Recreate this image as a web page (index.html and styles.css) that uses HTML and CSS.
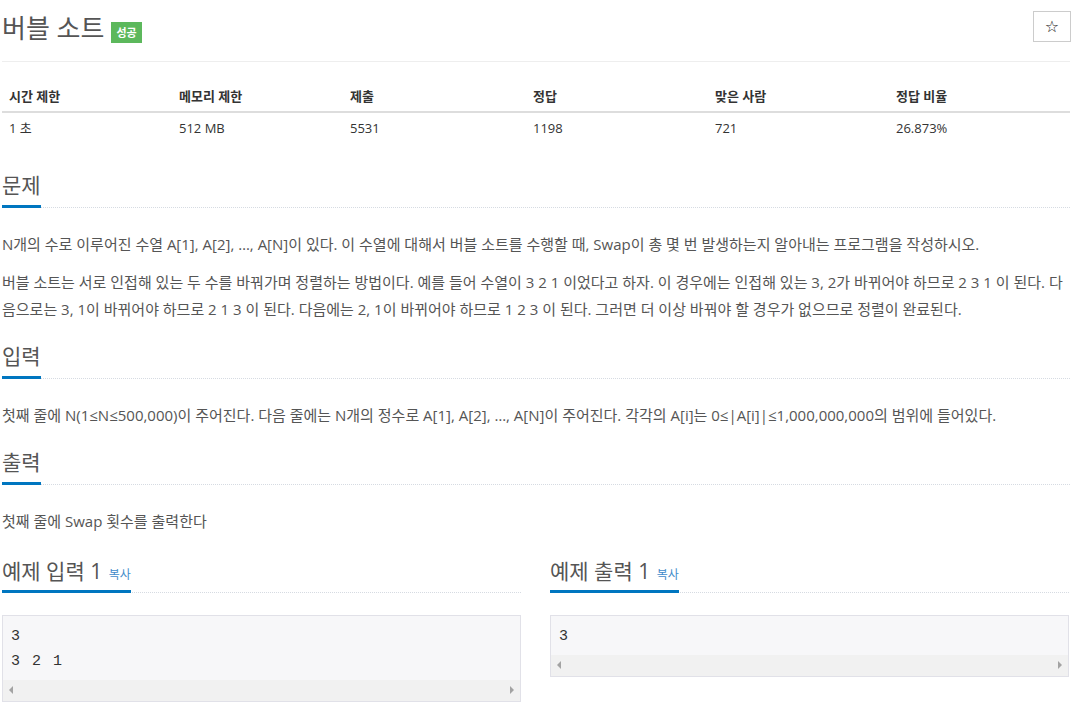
FILE: index.html
```html
<!DOCTYPE html>
<html lang="ko">
<head>
<meta charset="utf-8">
<title>버블 소트</title>
<link rel="stylesheet" href="styles.css">
</head>
<body>
<div class="page">
  <div class="page-header">
    <h1 class="title"><span class="title-text">버블 소트</span><span class="badge">성공</span></h1>
    <button class="star-btn" type="button">☆</button>
  </div>

  <div class="info-table">
    <div class="th">시간 제한</div>
    <div class="th">메모리 제한</div>
    <div class="th">제출</div>
    <div class="th">정답</div>
    <div class="th">맞은 사람</div>
    <div class="th">정답 비율</div>
    <div class="td">1 초</div>
    <div class="td">512 MB</div>
    <div class="td">5531</div>
    <div class="td">1198</div>
    <div class="td">721</div>
    <div class="td">26.873%</div>
  </div>

  <section class="section">
    <div class="headline"><h2><span>문제</span></h2></div>
    <div class="text">
      <p>N개의 수로 이루어진 수열 A[1], A[2], …, A[N]이 있다. 이 수열에 대해서 버블 소트를 수행할 때, Swap이 총 몇 번 발생하는지 알아내는 프로그램을 작성하시오.</p>
      <p>버블 소트는 서로 인접해 있는 두 수를 바꿔가며 정렬하는 방법이다. 예를 들어 수열이 3 2 1 이었다고 하자. 이 경우에는 인접해 있는 3, 2가 바뀌어야 하므로 2 3 1 이 된다. 다음으로는 3, 1이 바뀌어야 하므로 2 1 3 이 된다. 다음에는 2, 1이 바뀌어야 하므로 1 2 3 이 된다. 그러면 더 이상 바꿔야 할 경우가 없으므로 정렬이 완료된다.</p>
    </div>
  </section>

  <section class="section">
    <div class="headline"><h2><span>입력</span></h2></div>
    <div class="text">
      <p>첫째 줄에 N(1≤N≤500,000)이 주어진다. 다음 줄에는 N개의 정수로 A[1], A[2], …, A[N]이 주어진다. 각각의 A[i]는 0≤|A[i]|≤1,000,000,000의 범위에 들어있다.</p>
    </div>
  </section>

  <section class="section">
    <div class="headline"><h2><span>출력</span></h2></div>
    <div class="text">
      <p>첫째 줄에 Swap 횟수를 출력한다</p>
    </div>
  </section>

  <div class="samples">
    <section class="sample">
      <div class="headline"><h2><span>예제 입력 1 <a class="copy">복사</a></span></h2></div>
      <div class="pre-box">
        <pre>3
3 2 1</pre>
        <div class="hscroll"><i class="arr-l"></i><i class="arr-r"></i></div>
      </div>
    </section>
    <section class="sample">
      <div class="headline"><h2><span>예제 출력 1 <a class="copy">복사</a></span></h2></div>
      <div class="pre-box">
        <pre>3</pre>
        <div class="hscroll"><i class="arr-l"></i><i class="arr-r"></i></div>
      </div>
    </section>
  </div>
</div>
</body>
</html>
```

FILE: styles.css
```css
* { box-sizing: border-box; }
html, body { margin: 0; padding: 0; background: #fff; }
body {
  font-family: "Open Sans", "Noto Sans CJK KR", sans-serif;
  color: #555;
  font-size: 15px;
}
.page {
  width: 1068px;
  margin-left: 2px;
}
.page-header {
  display: flex;
  align-items: flex-start;
  justify-content: space-between;
  height: 62px;
  padding-top: 11px;
  border-bottom: 1px solid #eee;
}
.title {
  margin: 0;
  display: flex;
  align-items: flex-end;
  font-weight: 400;
  font-size: 26px;
  line-height: 34px;
  color: #555;
}
.badge {
  display: inline-block;
  margin-left: 7px;
  margin-bottom: 2px;
  background: #5cb85c;
  color: #fff;
  font-size: 11px;
  font-weight: 700;
  line-height: 21px;
  height: 21px;
  padding: 0 5px;
}
.star-btn {
  width: 38px;
  height: 31px;
  margin-right: -1px;
  background: #fff;
  border: 1px solid #ccc;
  font-size: 16px;
  line-height: 1;
  color: #222;
  font-family: "DejaVu Sans", sans-serif;
  padding: 0;
}
.info-table {
  display: grid;
  grid-template-columns: 170px 171px 183px 182px 181px 1fr;
  margin-top: 18px;
  font-size: 13px;
  color: #333;
}
.th {
  font-weight: 700;
  padding: 7px 7px 6px;
  line-height: 18px;
  border-bottom: 2px solid #ddd;
}
.td {
  padding: 6px 7px;
  line-height: 18px;
}
.section { margin-top: 27px; }
.section + .section { margin-top: 18px; }
.headline {
  border-bottom: 1px dotted #d6dbe2;
}
.headline h2 {
  margin: 0;
  font-size: 21px;
  font-weight: 400;
  line-height: 30px;
  color: #555;
}
.headline h2 span {
  display: inline-block;
  padding-bottom: 5px;
  border-bottom: 3px solid #0076c0;
  margin-bottom: -1px;
}
.copy {
  font-size: 12px;
  line-height: 0;
  color: #428bca;
  margin-left: 1px;
}
.text { padding-top: 23px; }
.text p {
  margin: 0 0 11px;
  line-height: 27px;
  color: #555;
}
.samples {
  display: grid;
  grid-template-columns: 519px 519px;
  column-gap: 29px;
  margin-top: 21px;
}
.sample .headline h2 span { padding-bottom: 4px; }
.pre-box {
  margin-top: 22px;
  border: 1px solid #e1e1e8;
  background: #f7f7f9;
}
.pre-box pre {
  margin: 0;
  padding: 8px 8px 6px;
  font-family: "Liberation Mono", "DejaVu Sans Mono", monospace;
  font-size: 15px;
  letter-spacing: 1.5px;
  line-height: 25px;
  color: #333;
}
.hscroll {
  position: relative;
  height: 21px;
  background: #f1f1f1;
}
.arr-l, .arr-r {
  position: absolute;
  top: 6px;
  width: 0;
  height: 0;
  border-top: 4px solid transparent;
  border-bottom: 4px solid transparent;
}
.arr-l { left: 6px; border-right: 4px solid #a3a3a3; }
.arr-r { right: 6px; border-left: 4px solid #a3a3a3; }
```
